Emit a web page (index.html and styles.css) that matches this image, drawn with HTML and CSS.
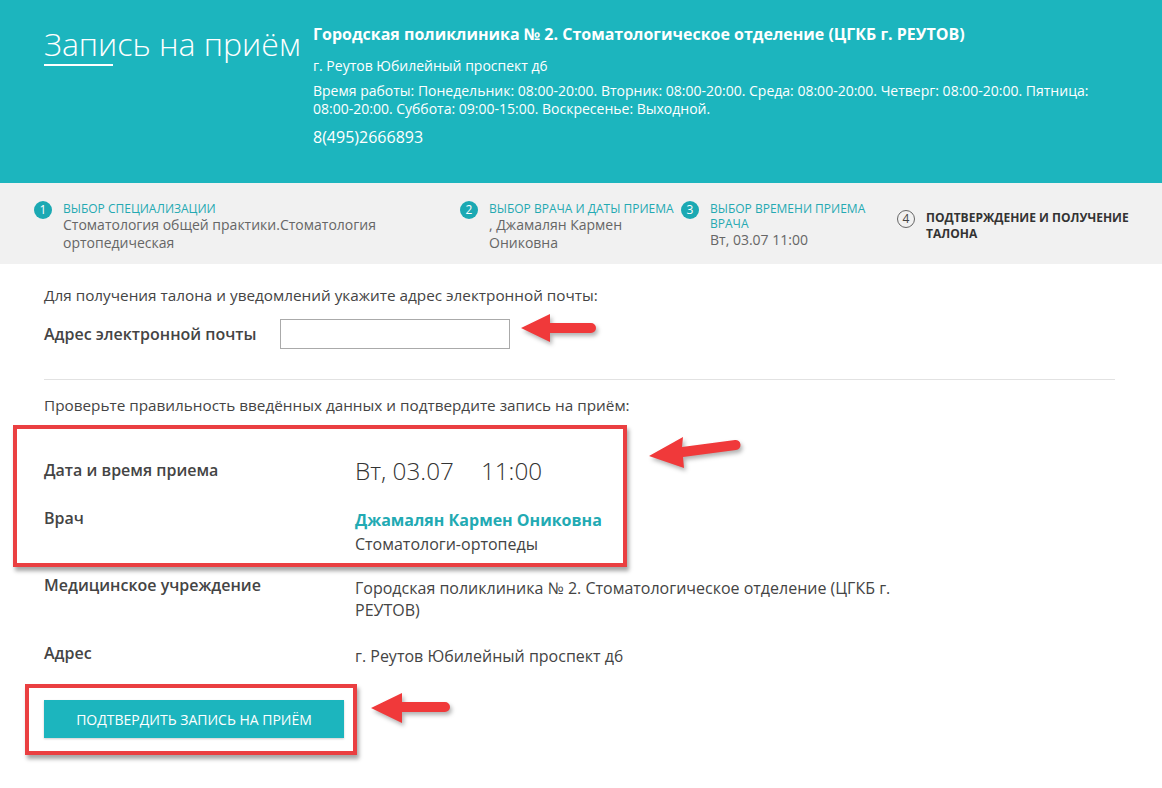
FILE: index.html
```html
<!DOCTYPE html>
<html lang="ru">
<head>
<meta charset="utf-8">
<title>Запись на приём</title>
<link rel="stylesheet" href="styles.css">
</head>
<body>
<header class="hero">
  <div class="hero-title">
    <h1>Запись на приём</h1>
    <div class="hero-underline"></div>
  </div>
  <div class="hero-info">
    <div class="clinic-name">Городская поликлиника № 2. Стоматологическое отделение (ЦГКБ г. РЕУТОВ)</div>
    <div class="clinic-addr">г. Реутов Юбилейный проспект д6</div>
    <div class="clinic-hours">Время работы: Понедельник: 08:00-20:00. Вторник: 08:00-20:00. Среда: 08:00-20:00. Четверг: 08:00-20:00. Пятница: 08:00-20:00. Суббота: 09:00-15:00. Воскресенье: Выходной.</div>
    <div class="clinic-phone">8(495)2666893</div>
  </div>
</header>

<nav class="steps">
  <div class="step step-1">
    <span class="step-num">1</span>
    <div class="step-body">
      <div class="step-label">Выбор специализации</div>
      <div class="step-value">Стоматология общей практики.Стоматология ортопедическая</div>
    </div>
  </div>
  <div class="step step-2">
    <span class="step-num">2</span>
    <div class="step-body">
      <div class="step-label">Выбор врача и даты приема</div>
      <div class="step-value">, Джамалян Кармен Ониковна</div>
    </div>
  </div>
  <div class="step step-3">
    <span class="step-num">3</span>
    <div class="step-body">
      <div class="step-label">Выбор времени приема врача</div>
      <div class="step-value">Вт, 03.07 11:00</div>
    </div>
  </div>
  <div class="step step-4 step-current">
    <span class="step-num">4</span>
    <div class="step-body">
      <div class="step-label">Подтверждение и получение талона</div>
    </div>
  </div>
</nav>

<main class="content">
  <p class="intro">Для получения талона и уведомлений укажите адрес электронной почты:</p>
  <div class="email-row">
    <label class="email-label" for="email">Адрес электронной почты</label>
    <input class="email-input" id="email" type="email">
    <svg class="arrow arrow-email" width="80" height="36" viewBox="0 0 80 36"><path d="M2 17 L31 3 L31 12 L72 12 A5 5 0 0 1 72 22 L31 22 L31 31 Z" fill="#f0393a"/></svg>
  </div>
  <hr class="divider">
  <p class="intro">Проверьте правильность введённых данных и подтвердите запись на приём:</p>

  <div class="highlight">
    <div class="row">
      <div class="row-label">Дата и время приема</div>
      <div class="row-value datetime">Вт, 03.07<span class="time">11:00</span></div>
    </div>
    <div class="row row-doctor">
      <div class="row-label">Врач</div>
      <div class="row-value doctor">
        <div class="doctor-name">Джамалян Кармен Ониковна</div>
        <div class="doctor-spec">Стоматологи-ортопеды</div>
      </div>
    </div>
    <svg class="arrow arrow-box" width="100" height="40" viewBox="0 0 100 40"><path d="M2 27 L36 8 L35 18 L88 11 A5 5 0 0 1 89 21 L36 28 L37 39 Z" fill="#f0393a"/></svg>
  </div>

  <div class="row row-plain">
    <div class="row-label">Медицинское учреждение</div>
    <div class="row-value">Городская поликлиника № 2. Стоматологическое отделение (ЦГКБ г. РЕУТОВ)</div>
  </div>
  <div class="row row-plain row-addr">
    <div class="row-label">Адрес</div>
    <div class="row-value">г. Реутов Юбилейный проспект д6</div>
  </div>

  <div class="btn-frame">
    <button class="btn-confirm" type="button">Подтвердить запись на приём</button>
    <svg class="arrow arrow-btn" width="86" height="36" viewBox="0 0 86 36"><path d="M2 18 L33 3 L33 12 L76 12 A5 5 0 0 1 76 22 L33 22 L33 33 Z" fill="#f0393a"/></svg>
  </div>
</main>
</body>
</html>
```

FILE: styles.css
```css
* { box-sizing: border-box; }
html, body { margin: 0; padding: 0; }
body {
  font-family: "Open Sans", "Liberation Sans", sans-serif;
  color: #444;
  background: #fff;
  width: 1162px;
  min-height: 788px;
  overflow: hidden;
}

.hero {
  background: #1cb5be;
  height: 183px;
  display: flex;
  padding: 24px 0 0 44px;
  color: #fff;
}
.hero-title { width: 269px; flex: none; }
.hero-title h1 {
  margin: 0;
  font-weight: 300;
  font-size: 32px;
  line-height: 40px;
}
.hero-underline {
  width: 69px;
  height: 2px;
  background: #fff;
}
.hero-info { width: 790px; font-size: 14px; }
.clinic-name {
  font-weight: 700;
  font-size: 16px;
  line-height: 20px;
}
.clinic-addr { margin-top: 12px; line-height: 20px; }
.clinic-hours { margin-top: 6px; line-height: 18px; }
.clinic-phone { margin-top: 9px; font-size: 16px; line-height: 20px; }

.steps {
  background: #f1f1f1;
  height: 81px;
  display: flex;
  padding: 18px 0 0 34px;
}
.step { display: flex; align-items: flex-start; }
.step-1 { width: 426px; }
.step-2 { width: 221px; }
.step-3 { width: 216px; }
.step-4 { width: 240px; padding-top: 9px; }
.step-num {
  flex: none;
  width: 18px;
  height: 18px;
  border-radius: 50%;
  background: #1ba9b3;
  color: #fff;
  font-size: 12px;
  line-height: 18px;
  text-align: center;
  margin-right: 11px;
}
.step-label {
  text-transform: uppercase;
  color: #24a9b2;
  font-size: 12px;
  line-height: 15px;
}
.step-value {
  color: #666;
  font-size: 14px;
  line-height: 18px;
}
.step-1 .step-body { width: 330px; }
.step-2 .step-body { width: 192px; }
.step-3 .step-body { width: 170px; }
.step-current .step-num {
  background: transparent;
  color: #444;
  border: 1px solid #666;
  line-height: 16px;
}
.step-current .step-label {
  color: #333;
  font-weight: 700;
  width: 210px;
  line-height: 16px;
}

.content { padding: 20px 47px 0 44px; position: relative; }
.intro {
  margin: 0;
  font-size: 15.3px;
  line-height: 22px;
}
.email-row {
  display: flex;
  align-items: center;
  margin-top: 13px;
  position: relative;
}
.email-label {
  width: 236px;
  font-size: 16px;
  font-weight: 600;
}
.email-input {
  width: 230px;
  height: 30px;
  border: 1px solid #aaa;
  background: #fff;
  margin: 0;
}
.arrow { position: absolute; filter: drop-shadow(2px 3px 2px rgba(0,0,0,0.3)); }
.arrow-email { left: 475px; top: -8px; }

.divider {
  border: 0;
  border-top: 1px solid #e2e2e2;
  margin: 30px 0 14px 0;
}

.highlight {
  position: relative;
  margin: 9px 0 0 -31px;
  width: 614px;
  height: 142px;
  border: 4px solid #ea3f41;
  box-shadow: 2px 4px 4px rgba(0,0,0,0.35);
  padding: 30px 0 0 27px;
}
.arrow-box { left: 630px; top: 0px; }
.row { display: flex; font-size: 16px; }
.row-label { width: 311px; flex: none; font-weight: 600; line-height: 22px; }
.row-value { line-height: 22px; }
.datetime {
  font-size: 24.3px;
  font-weight: 300;
  color: #333;
  line-height: 30px;
  margin-top: -3px;
}
.time { margin-left: 27px; }
.row-doctor { margin-top: 21px; }
.doctor { padding-top: 2px; }
.doctor-name { color: #22aab3; font-weight: 700; }
.doctor-spec { margin-top: 2px; }

.row-plain { margin-top: 7px; }
.row-plain .row-value { width: 545px; padding-top: 3px; }
.row-addr { margin-top: 21px; }

.btn-frame {
  position: relative;
  margin: 17px 0 0 -19px;
  width: 332px;
  height: 71px;
  border: 4px solid #ea3f41;
  box-shadow: 2px 4px 4px rgba(0,0,0,0.35);
  padding: 12px 0 0 15px;
}
.btn-confirm {
  width: 300px;
  height: 38px;
  background: #1cb5be;
  border: 0;
  color: #fff;
  font-family: "Open Sans", "Liberation Sans", sans-serif;
  font-size: 14px;
  text-transform: uppercase;
  box-shadow: 0 1px 2px rgba(0,0,0,0.2);
}
.arrow-btn { left: 340px; top: 2px; }
```
